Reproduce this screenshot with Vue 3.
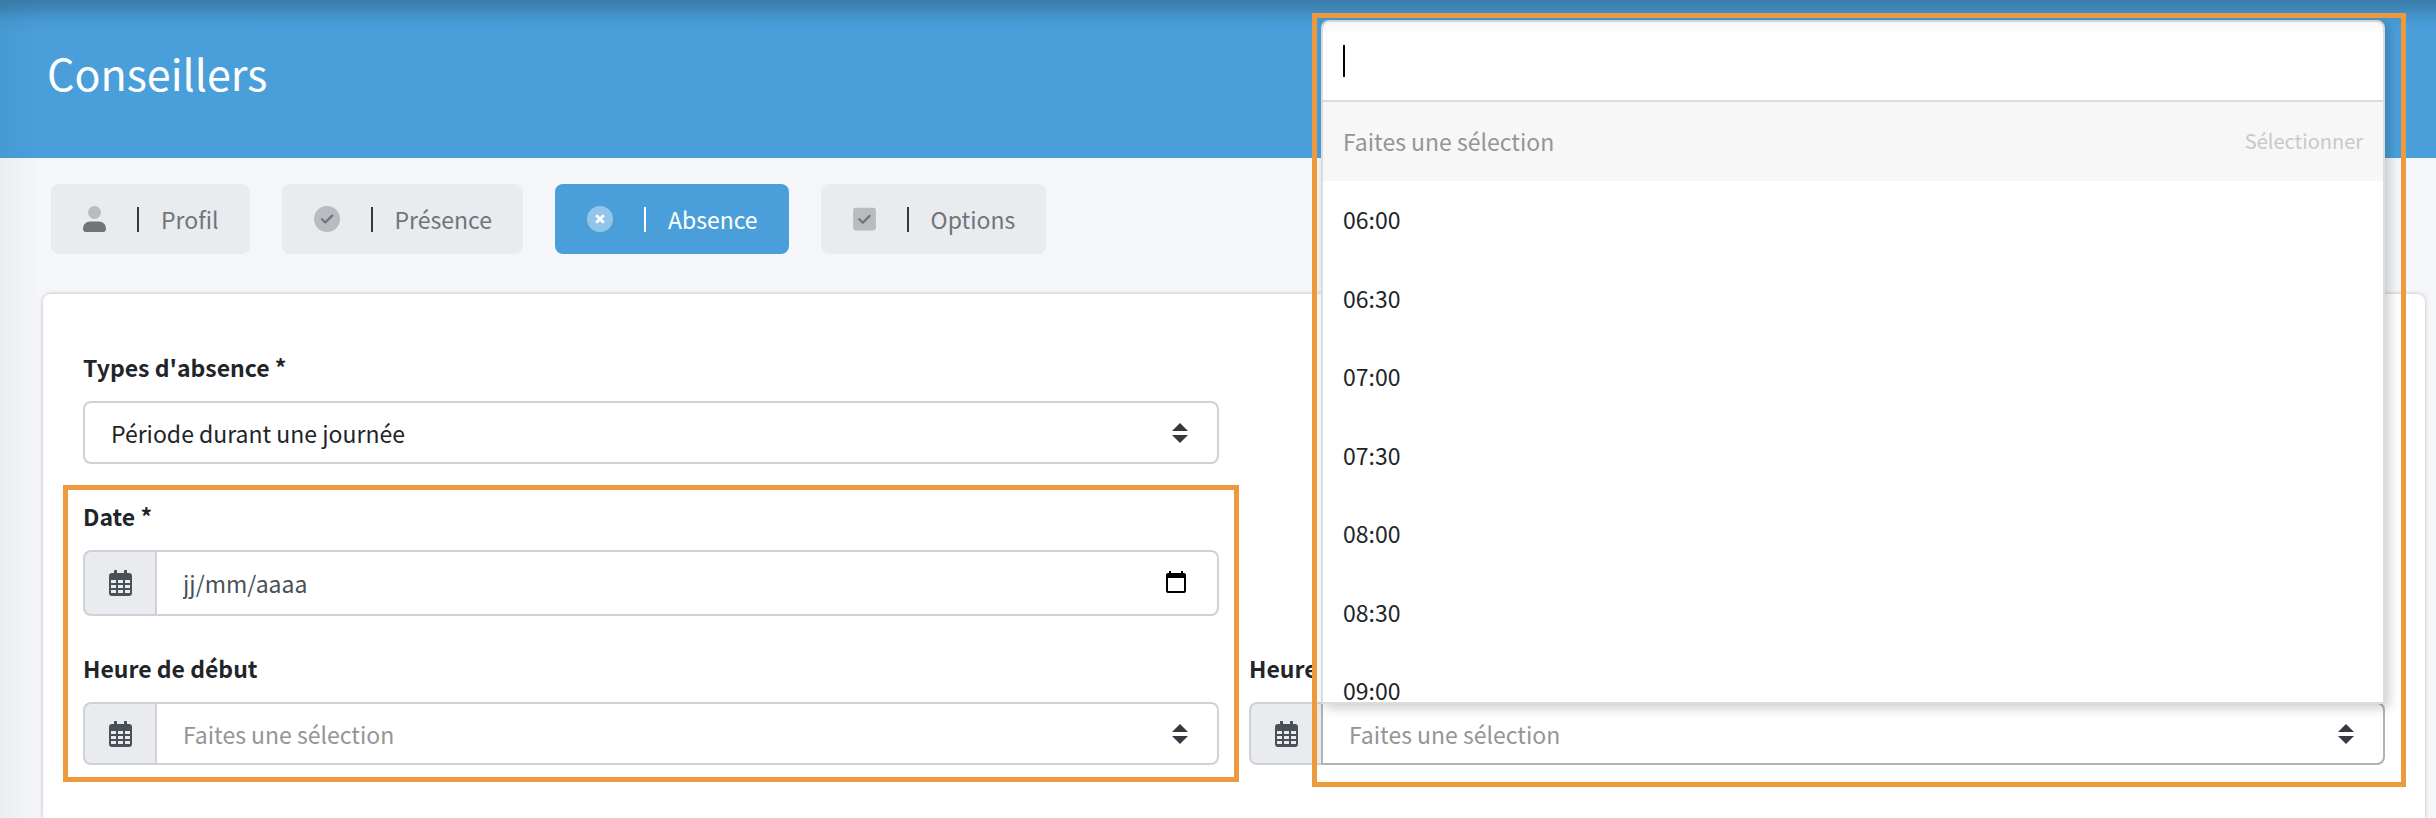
<script setup>
import { ref } from 'vue'

const tabs = [
  { id: 'profil', label: 'Profil', icon: 'user' },
  { id: 'presence', label: 'Présence', icon: 'check-circle' },
  { id: 'absence', label: 'Absence', icon: 'times-circle' },
  { id: 'options', label: 'Options', icon: 'check-square' },
]
const active = ref('absence')
const hours = ['06:00', '06:30', '07:00', '07:30', '08:00', '08:30', '09:00']
const type = ref('journee')
const date = ref('')
const start = ref('')
const end = ref('')
const search = ref('')
</script>

<template>
  <div class="page">
    <header class="banner">
      <h1>Conseillers</h1>
    </header>

    <nav class="tabs">
      <button
        v-for="tab in tabs"
        :key="tab.id"
        type="button"
        class="tab"
        :class="{ active: tab.id === active }"
        @click="active = tab.id"
      >
        <svg v-if="tab.icon === 'user'" class="icon narrow" viewBox="0 0 448 512">
          <circle cx="224" cy="128" r="128" opacity=".4" />
          <path d="M314 304H134C60 304 0 364 0 438v26c0 26 22 48 48 48h352c26 0 48-22 48-48v-26c0-74-60-134-134-134z" />
        </svg>
        <svg v-else-if="tab.icon === 'check-circle'" class="icon" viewBox="0 0 512 512">
          <circle cx="256" cy="256" r="256" opacity=".4" />
          <path class="stroke" d="M158 262l64 64 136-136" />
        </svg>
        <svg v-else-if="tab.icon === 'times-circle'" class="icon" viewBox="0 0 512 512">
          <circle cx="256" cy="256" r="256" opacity=".4" />
          <path class="stroke" d="M182 182l148 148M330 182L182 330" />
        </svg>
        <svg v-else class="icon narrow" viewBox="0 0 448 512">
          <rect y="32" width="448" height="448" rx="48" opacity=".4" />
          <path class="stroke" d="M122 262l68 68 136-136" />
        </svg>
        <span class="bar"></span>
        <span>{{ tab.label }}</span>
      </button>
    </nav>

    <main class="card">
      <form class="form" @submit.prevent>
        <div class="field type">
          <label for="type">Types d'absence *</label>
          <div class="control">
            <select id="type" v-model="type">
              <option value="journee">Période durant une journée</option>
            </select>
            <svg class="sort" viewBox="0 0 16 20"><path d="M8 0l8 8H0zM8 20l8-8H0z" /></svg>
          </div>
        </div>

        <div class="field date">
          <label for="date">Date *</label>
          <div class="group tall">
            <span class="addon">
              <svg class="calendar" viewBox="0 0 23 26">
                <path fill-rule="evenodd" d="M5 1a1 1 0 0 1 3 0v2h7V1a1 1 0 0 1 3 0v2h2a3 3 0 0 1 3 3v17a3 3 0 0 1-3 3H3a3 3 0 0 1-3-3V6a3 3 0 0 1 3-3h2zM2 10v3h5v-3zm7 0v3h5v-3zm7 0v3h5v-3zM2 15v3h5v-3zm7 0v3h5v-3zm7 0v3h5v-3zM2 20v3h5v-3zm7 0v3h5v-3zm7 0v3h5v-3z" />
              </svg>
            </span>
            <div class="control">
              <input id="date" v-model="date" type="text" placeholder="jj/mm/aaaa" />
              <button type="button" class="picker" aria-label="Ouvrir le calendrier">
                <svg viewBox="0 0 20 22">
                  <path fill-rule="evenodd" d="M3 0h2v2h10V0h2v2h1a2 2 0 0 1 2 2v16a2 2 0 0 1-2 2H2a2 2 0 0 1-2-2V4a2 2 0 0 1 2-2h1zM2 7v13h16V7z" />
                </svg>
              </button>
            </div>
          </div>
        </div>

        <div class="field start">
          <label for="start">Heure de début</label>
          <div class="group">
            <span class="addon">
              <svg class="calendar" viewBox="0 0 23 26">
                <path fill-rule="evenodd" d="M5 1a1 1 0 0 1 3 0v2h7V1a1 1 0 0 1 3 0v2h2a3 3 0 0 1 3 3v17a3 3 0 0 1-3 3H3a3 3 0 0 1-3-3V6a3 3 0 0 1 3-3h2zM2 10v3h5v-3zm7 0v3h5v-3zm7 0v3h5v-3zM2 15v3h5v-3zm7 0v3h5v-3zm7 0v3h5v-3zM2 20v3h5v-3zm7 0v3h5v-3zm7 0v3h5v-3z" />
              </svg>
            </span>
            <div class="control">
              <select id="start" v-model="start" class="empty">
                <option value="">Faites une sélection</option>
                <option v-for="h in hours" :key="h">{{ h }}</option>
              </select>
              <svg class="sort" viewBox="0 0 16 20"><path d="M8 0l8 8H0zM8 20l8-8H0z" /></svg>
            </div>
          </div>
        </div>

        <div class="field end">
          <label for="end">Heure de fin</label>
          <div class="group">
            <span class="addon">
              <svg class="calendar" viewBox="0 0 23 26">
                <path fill-rule="evenodd" d="M5 1a1 1 0 0 1 3 0v2h7V1a1 1 0 0 1 3 0v2h2a3 3 0 0 1 3 3v17a3 3 0 0 1-3 3H3a3 3 0 0 1-3-3V6a3 3 0 0 1 3-3h2zM2 10v3h5v-3zm7 0v3h5v-3zm7 0v3h5v-3zM2 15v3h5v-3zm7 0v3h5v-3zm7 0v3h5v-3zM2 20v3h5v-3zm7 0v3h5v-3zm7 0v3h5v-3z" />
              </svg>
            </span>
            <div class="control open">
              <select id="end" v-model="end" class="empty">
                <option value="">Faites une sélection</option>
                <option v-for="h in hours" :key="h">{{ h }}</option>
              </select>
              <svg class="sort" viewBox="0 0 16 20"><path d="M8 0l8 8H0zM8 20l8-8H0z" /></svg>

              <div class="dropdown">
                <div class="search">
                  <input v-model="search" type="text" aria-label="Rechercher une heure" />
                  <span class="caret"></span>
                </div>
                <ul class="options">
                  <li class="highlight">
                    <span>Faites une sélection</span>
                    <small>Sélectionner</small>
                  </li>
                  <li v-for="h in hours" :key="h" @click="end = h">{{ h }}</li>
                </ul>
              </div>
              <div class="outline outline-list"></div>
            </div>
          </div>
        </div>

        <div class="outline outline-fields"></div>
      </form>
    </main>
  </div>
</template>

<style>
body {
  margin: 0;
}
</style>

<style scoped>
.page,
.page * {
  box-sizing: border-box;
}

.page {
  position: relative;
  display: flex;
  flex-direction: column;
  height: 100vh;
  min-height: 800px;
  overflow: hidden;
  background: #f4f6fa;
  color: #212529;
  font-family: "Noto Sans CJK SC", "Noto Sans", sans-serif;
  font-size: 23px;
  line-height: 32px;
}

.page::before,
.page::after {
  content: "";
  position: absolute;
  pointer-events: none;
}

.page::before {
  inset: 0 0 auto;
  z-index: 5;
  height: 34px;
  background: linear-gradient(rgba(0, 0, 0, .21), rgba(0, 0, 0, .17) 7px, rgba(0, 0, 0, .04) 20px, transparent);
}

.page::after {
  inset: 0 auto 0 0;
  width: 40px;
  background: linear-gradient(90deg, rgba(0, 0, 0, .04), transparent);
}

button,
input,
select {
  font: inherit;
  color: inherit;
}

.banner {
  flex: none;
  height: 158px;
  padding: 42px 47px 0;
  background: #4a9fdb;
  color: #fff;
}

h1 {
  margin: 0;
  font-size: 43px;
  font-weight: 400;
  line-height: 60px;
}

.tabs {
  display: flex;
  flex: none;
  gap: 32px;
  padding: 26px 51px 40px;
}

.tab {
  display: flex;
  align-items: center;
  height: 70px;
  padding: 0 31px 0 32px;
  border: 0;
  border-radius: 8px;
  background: #eaebef;
  color: #6f757a;
}

.tab.active {
  background: #4a9fdb;
  color: #fff;
}

.icon {
  width: 26px;
  height: 26px;
  fill: currentColor;
}

.icon.narrow {
  width: 23px;
}

.stroke {
  fill: none;
  stroke: currentColor;
  stroke-width: 44;
  stroke-linecap: round;
  stroke-linejoin: round;
}

.active .stroke {
  stroke-width: 52;
  stroke-linecap: butt;
}

.bar {
  width: 2px;
  height: 25px;
  margin: 0 22px 0 31px;
  background: #343a40;
}

.active .bar {
  background: #fff;
}

.card {
  flex: 1;
  margin: 0 11px 0 43px;
  padding: 57px 40px 0;
  border-radius: 8px 8px 0 0;
  background: #fff;
  box-shadow: 0 0 4px rgba(0, 0, 0, .24);
}

.form {
  display: grid;
  grid-template-columns: 1fr 1fr;
  gap: 36px 30px;
}

.type {
  grid-area: 1 / 1;
}

.date {
  grid-area: 2 / 1;
}

.start {
  grid-area: 3 / 1;
}

.end {
  grid-area: 3 / 2;
}

label {
  display: block;
  margin-bottom: 18px;
  font-weight: 700;
}

.group {
  display: flex;
}

.addon {
  display: flex;
  flex: none;
  align-items: center;
  justify-content: center;
  width: 72px;
  border: 2px solid #ced2d6;
  border-right: 0;
  border-radius: 8px 0 0 8px;
  background: #e9ebef;
}

.calendar {
  width: 23px;
  height: 26px;
  fill: #495057;
}

.control {
  position: relative;
  flex: 1;
  height: 63px;
}

.tall .control {
  height: 66px;
}

.control > select,
.control > input {
  display: block;
  width: 100%;
  height: 100%;
  margin: 0;
  padding: 0 60px 0 26px;
  border: 2px solid #ced2d6;
  border-radius: 8px;
  outline: 0;
  background: #fff;
  appearance: none;
}

.group .control > select,
.group .control > input {
  border-radius: 0 8px 8px 0;
}

.control > .empty {
  color: #959595;
}

.control > input::placeholder {
  color: #495057;
  opacity: 1;
}

.group .control.open > select {
  border-color: #b0b2b4;
}

.sort {
  position: absolute;
  top: 22px;
  right: 31px;
  width: 16px;
  height: 20px;
  fill: #343a40;
  pointer-events: none;
}

.picker {
  position: absolute;
  top: 21px;
  right: 33px;
  width: 20px;
  height: 22px;
  padding: 0;
  border: 0;
  background: none;
}

.picker svg {
  display: block;
  width: 20px;
  height: 22px;
  fill: #000;
}

.dropdown {
  position: absolute;
  right: 0;
  bottom: 61px;
  left: 0;
  z-index: 2;
  height: 684px;
  overflow: hidden;
  border: 2px solid #dcdcdc;
  border-radius: 8px 8px 0 0;
  background: #fff;
}

.control.open::before {
  content: "";
  position: absolute;
  right: 0;
  bottom: 61px;
  left: 0;
  z-index: 1;
  height: 684px;
  border-radius: 8px 8px 0 0;
  box-shadow: 4px 4px 12px rgba(0, 0, 0, .2);
}

.search {
  display: flex;
  align-items: center;
  position: relative;
  height: 80px;
  border-bottom: 2px solid #dcdcdc;
}

.search input {
  width: 100%;
  height: 100%;
  padding: 0 20px;
  border: 0;
  outline: 0;
  background: none;
}

.caret {
  position: absolute;
  left: 20px;
  width: 2px;
  height: 32px;
  background: #000;
}

.options {
  margin: 0;
  padding: 0;
  list-style: none;
}

.options li {
  display: flex;
  align-items: center;
  justify-content: space-between;
  height: 78px;
  padding: 0 20px 2px;
}

.options li:nth-child(odd) {
  height: 79px;
}

.options .highlight {
  background: #f7f7f7;
  color: #959595;
}

.options small {
  color: #c8c8c8;
  font-size: 20px;
}

.outline {
  border: 5px solid #ed9a3e;
  pointer-events: none;
}

.outline-fields {
  grid-area: 2 / 1 / 4 / 2;
  z-index: 3;
  margin: -15px -20px -17px;
}

.outline-list {
  position: absolute;
  inset: -689px -21px -22px -9px;
  z-index: 6;
}
</style>
